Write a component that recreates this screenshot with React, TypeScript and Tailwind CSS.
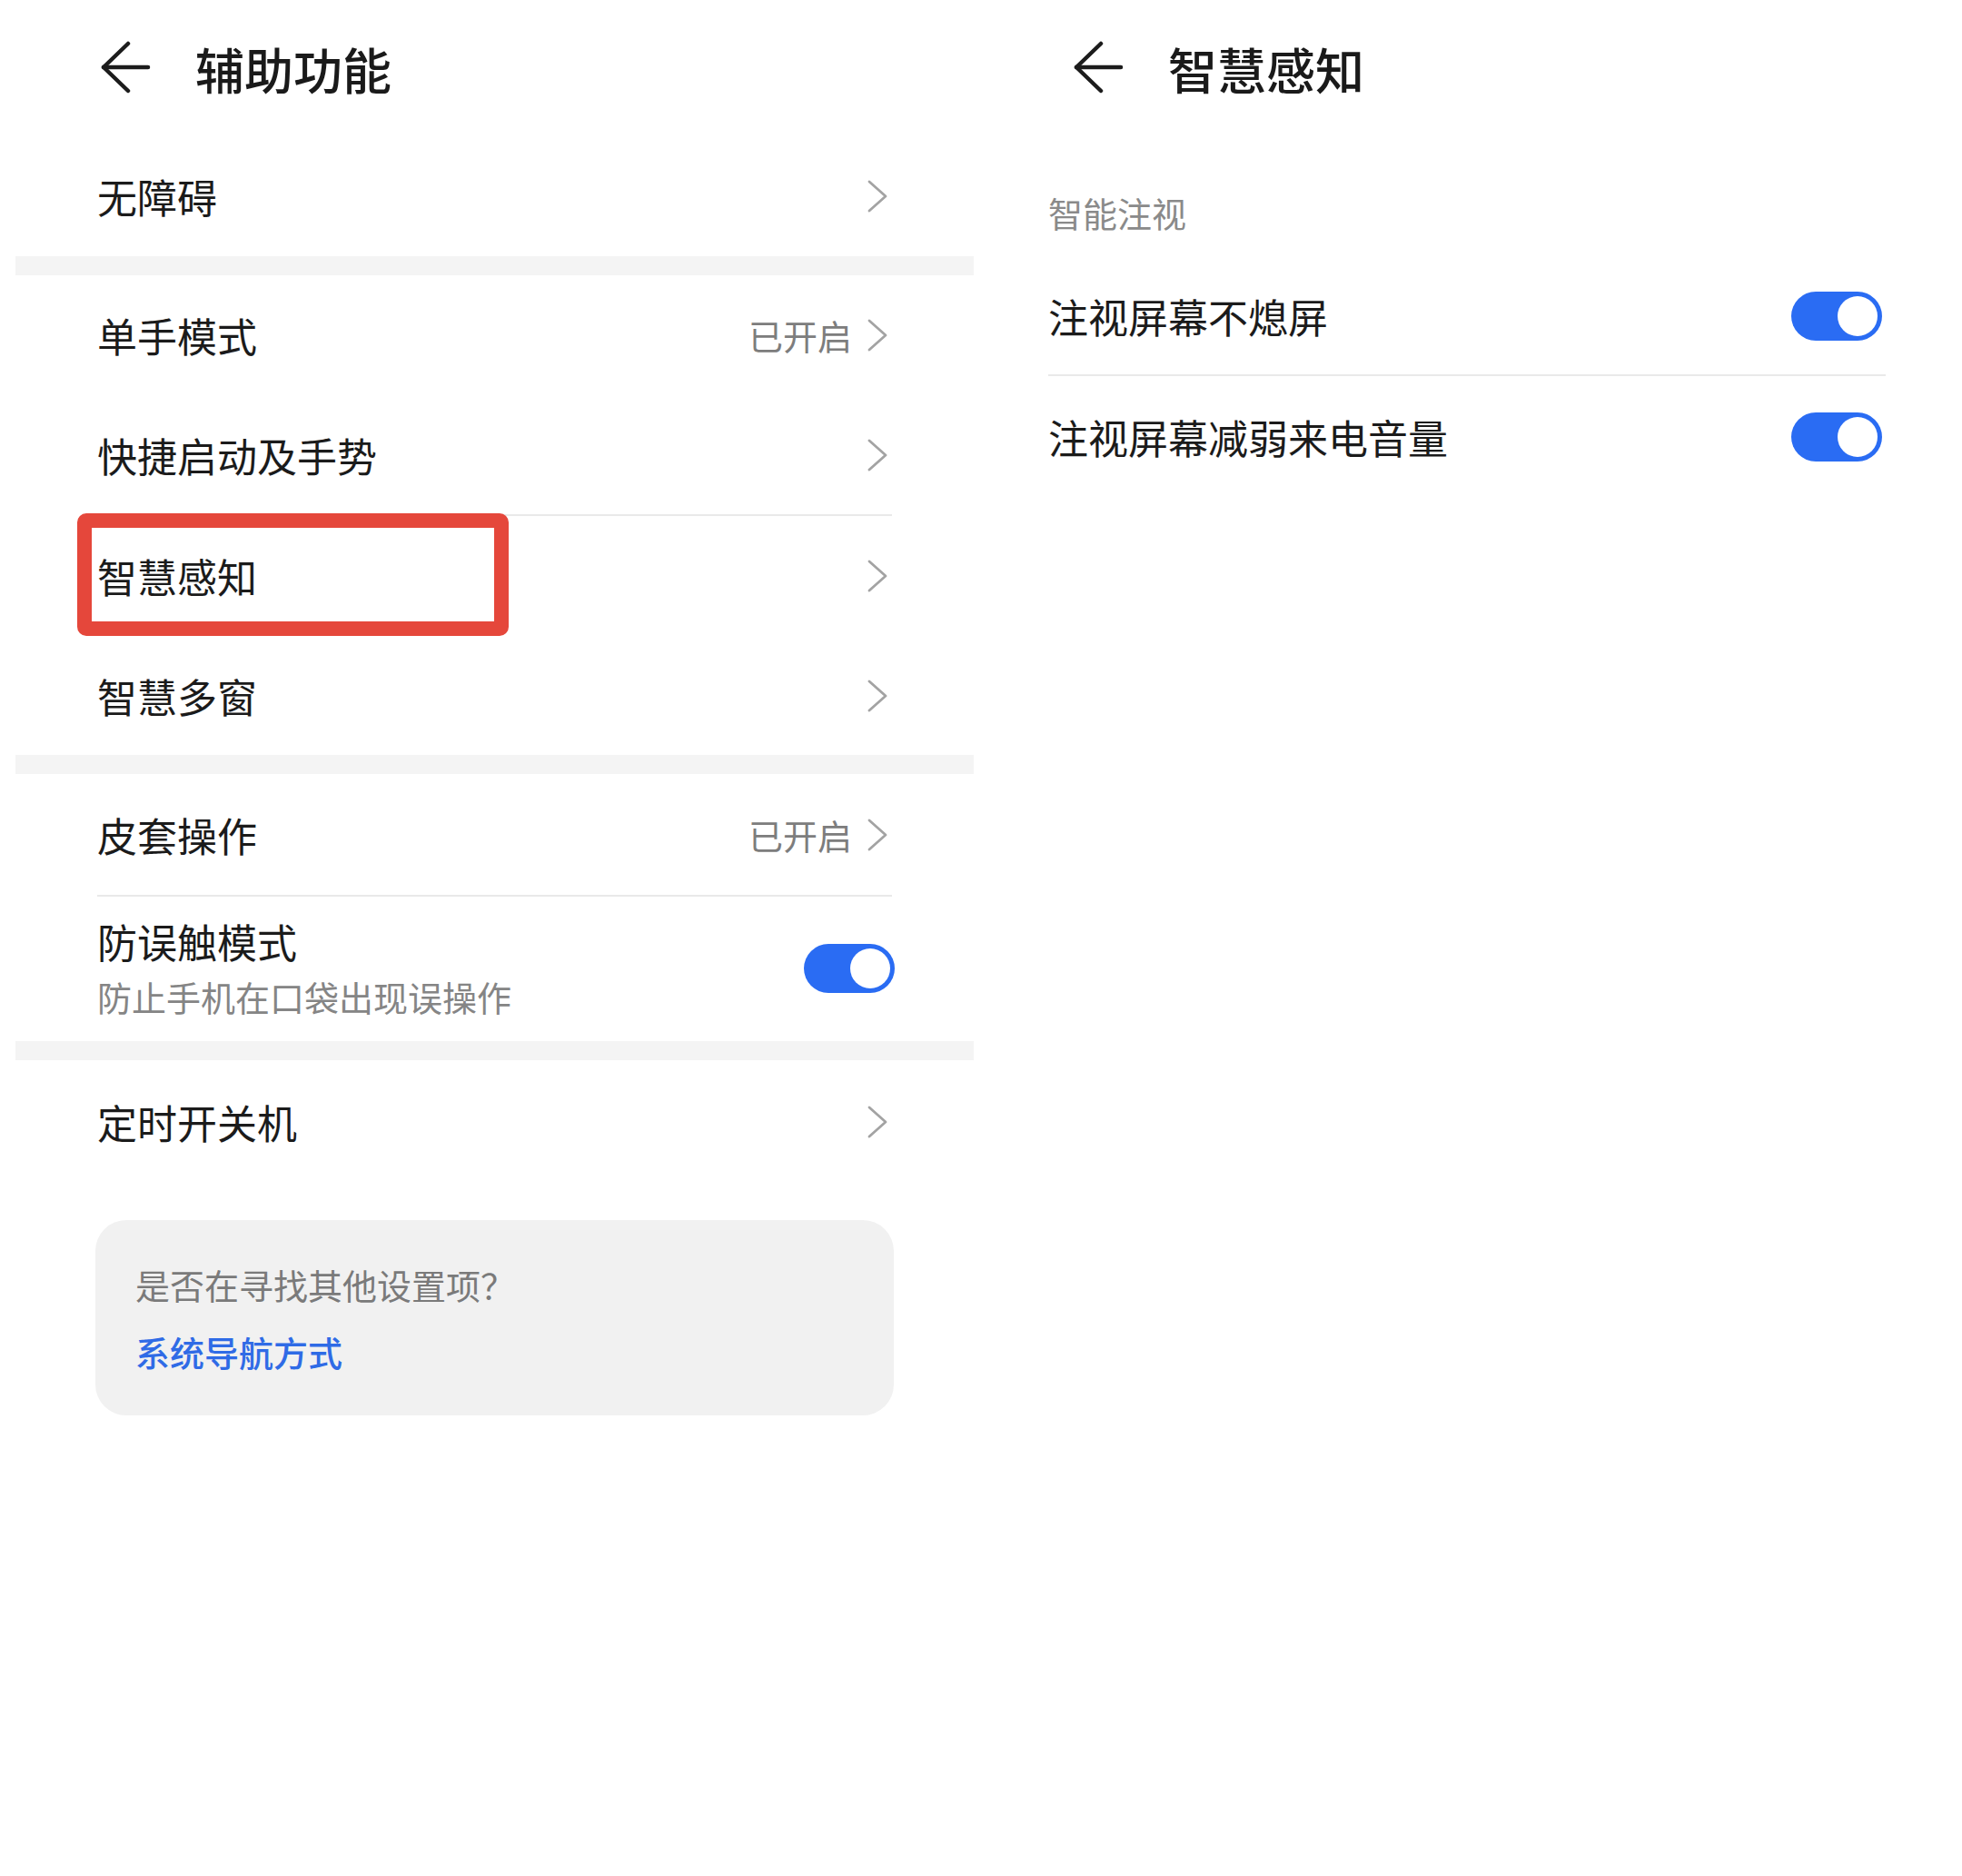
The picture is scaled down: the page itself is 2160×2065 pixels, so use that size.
import React from "react";

const FONT = "font-['Noto_Sans_CJK_SC','Noto_Sans',sans-serif]";

function BackArrow() {
  return (
    <svg width="56" height="60" viewBox="0 0 56 60" fill="none" className="shrink-0">
      <path d="M30 4 L3 30 L30 56" stroke="#1c1c1c" strokeWidth="4.5" strokeLinecap="round" strokeLinejoin="round" />
      <path d="M3 30 L52 30" stroke="#1c1c1c" strokeWidth="4.5" strokeLinecap="round" />
    </svg>
  );
}

function Chevron() {
  return (
    <svg width="28" height="40" viewBox="0 0 28 40" fill="none" className="shrink-0">
      <path d="M3 4 L21 20 L3 36" stroke="#a3a3a3" strokeWidth="2.8" strokeLinecap="round" strokeLinejoin="round" />
    </svg>
  );
}

function Toggle() {
  return (
    <div className="w-[100px] h-[54px] rounded-full bg-[#2a6cf3] p-[5px] flex justify-end items-center shrink-0">
      <div className="w-[44px] h-[44px] rounded-full bg-white" />
    </div>
  );
}

function Row({ label, value, h }: { label: string; value?: string; h: string }) {
  return (
    <div className={`${h} px-[90px] flex items-center justify-between`}>
      <span className="text-[44px] leading-[56px] text-[#1b1b1b]">{label}</span>
      <div className="flex items-center gap-[16px]">
        {value && <span className="text-[38px] leading-[50px] text-[#7d7d7d]">{value}</span>}
        <Chevron />
      </div>
    </div>
  );
}

function Band() {
  return <div className="h-[21px] bg-[#f4f4f4]" />;
}

function Divider() {
  return (
    <div className="px-[90px]">
      <div className="h-[2px] bg-[#e9e9e9]" />
    </div>
  );
}

export default function App() {
  return (
    <div className={`w-[2160px] h-[2065px] bg-white flex ${FONT}`}>
      {/* Left panel */}
      <div className="w-[1080px] pl-[17px] pr-[8px]">
        <div className="h-[150px] flex items-center pl-[94px] pb-[2px]">
          <BackArrow />
          <span className="ml-[48px] text-[54px] leading-[64px] font-medium text-[#1a1a1a] mt-[4px]">辅助功能</span>
        </div>
        <Row label="无障碍" h="h-[132px]" />
        <Band />
        <Row label="单手模式" value="已开启" h="h-[132px]" />
        <Row label="快捷启动及手势" h="h-[131px]" />
        <Divider />
        <div className="relative">
          <Row label="智慧感知" h="h-[132px]" />
          <div className="absolute left-[68px] top-[-3px] w-[475px] h-[135px] border-[16px] border-[#e5473b] rounded-[10px]" />
        </div>
        <Row label="智慧多窗" h="h-[131px]" />
        <Band />
        <Row label="皮套操作" value="已开启" h="h-[133px]" />
        <Divider />
        <div className="h-[159px] pl-[90px] pr-[87px] flex items-center justify-between pb-[2px]">
          <div className="flex flex-col">
            <span className="text-[44px] leading-[54px] text-[#1b1b1b]">防误触模式</span>
            <span className="mt-[9px] text-[38px] leading-[50px] text-[#858585]">防止手机在口袋出现误操作</span>
          </div>
          <Toggle />
        </div>
        <Band />
        <Row label="定时开关机" h="h-[136px]" />
        <div className="px-[88px] pt-[40px]">
          <div className="h-[215px] rounded-[34px] bg-[#f1f1f1] pl-[44px] pt-[46px]">
            <div className="text-[38px] leading-[50px] text-[#7a7a7a]">是否在寻找其他设置项？</div>
            <div className="mt-[24px] text-[38px] leading-[50px] font-medium text-[#2f6be6]">系统导航方式</div>
          </div>
        </div>
      </div>

      {/* Right panel */}
      <div className="w-[1080px]">
        <div className="h-[150px] flex items-center pl-[102px] pb-[2px]">
          <BackArrow />
          <span className="ml-[48px] text-[54px] leading-[64px] font-medium text-[#1a1a1a] mt-[4px]">智慧感知</span>
        </div>
        <div className="pl-[74px] pr-[84px]">
          <div className="h-[133px] pt-[59px]">
            <span className="text-[38px] leading-[50px] text-[#8a8a8a]">智能注视</span>
          </div>
          <div className="h-[129px] flex items-center justify-between pr-[4px]">
            <span className="text-[44px] leading-[56px] text-[#1b1b1b]">注视屏幕不熄屏</span>
            <Toggle />
          </div>
          <div className="h-[2px] bg-[#e9e9e9]" />
          <div className="h-[134px] flex items-center justify-between pr-[4px]">
            <span className="text-[44px] leading-[56px] text-[#1b1b1b]">注视屏幕减弱来电音量</span>
            <Toggle />
          </div>
        </div>
      </div>
    </div>
  );
}
